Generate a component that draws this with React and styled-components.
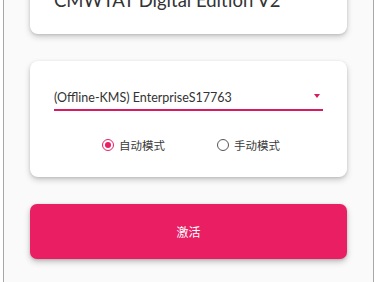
import React, { useState } from "react";
import styled, { createGlobalStyle } from "styled-components";

const GlobalStyle = createGlobalStyle`
  html, body {
    margin: 0;
    padding: 0;
    background: #ffffff;
    overflow: hidden;
  }
  body {
    font-family: "Lato", "Noto Sans CJK SC", sans-serif;
  }
`;

const Viewport = styled.div`
  height: 282px;
  padding-left: 3px;
  overflow: hidden;
`;

const Frame = styled.div`
  width: 371px;
  height: 282px;
  box-sizing: border-box;
  border-left: 1px solid #a8a8a8;
  border-right: 1px solid #a8a8a8;
  background: #fafafa;
  padding: 0 26px;
  display: flex;
  flex-direction: column;
  gap: 27px;
`;

const Card = styled.div`
  background: #ffffff;
  border-radius: 8px;
  box-shadow: 0 3px 6px rgba(0, 0, 0, 0.18), 0 1px 3px rgba(0, 0, 0, 0.12);
  padding: ${(p) => p.$pad};
  margin-top: ${(p) => p.$top || "0"};
`;

const Title = styled.h1`
  margin: 0;
  font-family: "Lato", sans-serif;
  font-weight: 400;
  font-size: 18.5px;
  line-height: 30px;
  white-space: nowrap;
  color: #333333;
`;

const SelectBox = styled.div`
  display: flex;
  align-items: center;
  justify-content: space-between;
  height: 24px;
  border-bottom: 2px solid #d81b60;
  font-family: "Lato", sans-serif;
  font-size: 12.5px;
  color: #333333;
  padding-right: 2px;
`;

const Arrow = styled.span`
  width: 0;
  height: 0;
  border-left: 3.5px solid transparent;
  border-right: 3.5px solid transparent;
  border-top: 4px solid #d81b60;
  margin-right: 1px;
  margin-top: -2px;
`;

const RadioRow = styled.div`
  display: flex;
  justify-content: center;
  gap: 52px;
  margin-top: 26px;
  padding-left: 5px;
`;

const RadioLabel = styled.label`
  display: flex;
  align-items: center;
  gap: 5px;
  height: 16px;
  font-family: "Noto Sans CJK SC", sans-serif;
  font-size: 11.5px;
  color: #3a3a3a;
  cursor: pointer;
`;

const Dot = styled.span`
  width: 10px;
  height: 10px;
  border-radius: 50%;
  border: 1.5px solid ${(p) => (p.$on ? "#e91e63" : "#555555")};
  display: flex;
  align-items: center;
  justify-content: center;
  &::after {
    content: "";
    width: 6px;
    height: 6px;
    border-radius: 50%;
    background: ${(p) => (p.$on ? "#e91e63" : "transparent")};
  }
`;

const ActivateButton = styled.button`
  height: 55px;
  border: none;
  border-radius: 7px;
  background: #e91e63;
  color: #ffffff;
  font-family: "Noto Sans CJK SC", sans-serif;
  font-size: 12px;
  box-shadow: 0 3px 6px rgba(0, 0, 0, 0.22), 0 1px 3px rgba(0, 0, 0, 0.14);
  cursor: pointer;
`;

export default function App() {
  const [mode, setMode] = useState("auto");

  return (
    <Viewport>
      <GlobalStyle />
      <Frame>
        <Card $pad="0 24px 19px" $top="-15px">
          <Title>CMWTAT Digital Edition V2</Title>
        </Card>
        <Card $pad="24px 24px 24px">
          <SelectBox>
            <span>(Offline-KMS) EnterpriseS17763</span>
            <Arrow />
          </SelectBox>
          <RadioRow>
            <RadioLabel onClick={() => setMode("auto")}>
              <Dot $on={mode === "auto"} />
              自动模式
            </RadioLabel>
            <RadioLabel onClick={() => setMode("manual")}>
              <Dot $on={mode === "manual"} />
              手动模式
            </RadioLabel>
          </RadioRow>
        </Card>
        <ActivateButton>激活</ActivateButton>
      </Frame>
    </Viewport>
  );
}
